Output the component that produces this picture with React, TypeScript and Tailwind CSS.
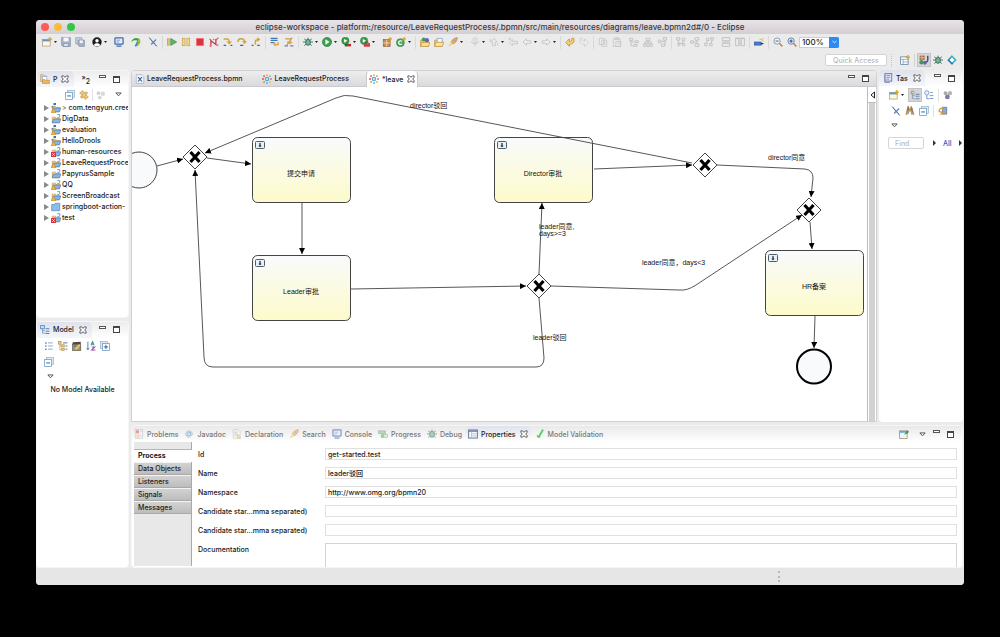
import type { ReactNode } from "react";

const glyphs: Record<string, ReactNode> = {
  newWizard: (
    <>
      <rect x="1" y="4" width="12" height="10.5" fill="#fdf8e6" stroke="#a68b58" />
      <rect x="1" y="4" width="12" height="3" fill="#5d93cf" />
      <path d="M12.5 0v7M9 3.5h7" stroke="#d9a520" strokeWidth="2" />
    </>
  ),
  save: (
    <>
      <path d="M1 1h14v14H3l-2-2z" fill="#a7b4c6" stroke="#7385a0" />
      <rect x="4" y="1" width="8" height="6" fill="#f3f6fa" />
      <rect x="4.5" y="10" width="7" height="5" fill="#dfe5ee" stroke="#7385a0" />
    </>
  ),
  saveAll: (
    <>
      <path d="M1 1h10v10H1z" fill="#c4cedb" stroke="#8a99b0" />
      <path d="M5 5h10v10H7l-2-2z" fill="#a7b4c6" stroke="#7385a0" />
      <rect x="7.5" y="5.5" width="5" height="4" fill="#f3f6fa" />
    </>
  ),
  person: (
    <>
      <circle cx="8" cy="8" r="7.5" fill="#1c1c1c" />
      <circle cx="8" cy="6" r="2.8" fill="#fff" />
      <path d="M3 13c1-4 9-4 10 0-3 2.5-7 2.5-10 0z" fill="#fff" />
    </>
  ),
  console: (
    <>
      <rect x="1.5" y="1.5" width="13" height="10" rx="1" fill="#e9f1fb" stroke="#3f67a8" strokeWidth="2" />
      <path d="M4 5h6M4 8h4" stroke="#3f67a8" />
      <path d="M4 14.5h8" stroke="#3f67a8" strokeWidth="2" />
    </>
  ),
  swoosh: (
    <>
      <path d="M0 8c3-7 9-8 14-4l-2 3C8 4 4 5 0 8z" fill="#3f9f48" />
      <path d="M13 2c4 4 2 10-3 13l-2-1c3-3 4-6 3-9z" fill="#9cc431" />
      <path d="M11 7l-4 8" stroke="#3b82c4" strokeWidth="2.4" />
    </>
  ),
  pin: (
    <>
      <path d="M2 1l12 14" stroke="#33577f" strokeWidth="1.6" />
      <path d="M13 4l-8 8M6 7l4 3" stroke="#5c89bd" strokeWidth="2" />
    </>
  ),
  resume: (
    <>
      <rect x="0.5" y="3" width="3" height="10" fill="#f0cf66" stroke="#b98d27" />
      <path d="M6 2.5l9.5 5.5L6 13.5z" fill="#5fb769" stroke="#2a8340" />
    </>
  ),
  pause: (
    <>
      <rect x="2" y="2" width="4.5" height="12" fill="#f3d889" stroke="#c09a42" />
      <rect x="9.5" y="2" width="4.5" height="12" fill="#f3d889" stroke="#c09a42" />
    </>
  ),
  stop: <rect x="2" y="2" width="12" height="12" fill="#e0303a" stroke="#f08a90" />,
  disconnect: (
    <>
      <path d="M3 14V6l8 6V3" fill="none" stroke="#c93c4b" strokeWidth="2" />
      <path d="M1 3l3 3M15 1l-4 4M1 14.500h3M12 13h3M7 3l1 2" stroke="#d9525f" strokeWidth="1.8" />
    </>
  ),
  stepInto: (
    <>
      <path d="M1 3h6c3 0 3 3 3 6" fill="none" stroke="#d8a33d" strokeWidth="2.4" />
      <path d="M5.500 7h9l-4.500 5z" fill="#d8a33d" />
      <path d="M1 13.500h4M12 13.500h3" stroke="#4d5f87" strokeWidth="2" />
    </>
  ),
  stepOver: (
    <>
      <path d="M1.500 8c0-7 9-7 11-1" fill="none" stroke="#d8a33d" strokeWidth="2.4" />
      <path d="M8 6.500h8l-4 5z" fill="#d8a33d" />
      <path d="M5 13.500h5" stroke="#4d5f87" strokeWidth="2" />
    </>
  ),
  stepReturn: (
    <>
      <path d="M7 12V7c0-2 2-3 6-3" fill="none" stroke="#d8a33d" strokeWidth="2.4" />
      <path d="M10 0l5 4-5 4z" fill="#d8a33d" />
      <path d="M1 13.500h3M10 13.500h4" stroke="#4d5f87" strokeWidth="2" />
    </>
  ),
  dropFrame: (
    <>
      <path d="M1 2h11M1 5.500h11M1 9h6" stroke="#4776b4" strokeWidth="2" />
      <path d="M9 12h4V8" fill="none" stroke="#d8a33d" strokeWidth="2" />
      <path d="M5 12l4-3.500v7z" fill="#d8a33d" />
    </>
  ),
  stepFilter: (
    <>
      <path d="M2 3h9M5 8h6M13 1L4 14" stroke="#c99a4a" strokeWidth="2" />
      <path d="M9 5l5 4-6 3z" fill="#dba84a" />
      <path d="M1 14h5M10 14h5" stroke="#6d7da5" strokeWidth="2" />
    </>
  ),
  bug: (
    <>
      <path d="M2 3l4 3M14 3l-4 3M0 8h5M16 8h-5M2 14l4-4M14 14l-4-4M8 1v3" stroke="#3b6a63" strokeWidth="1.4" />
      <ellipse cx="8" cy="8.500" rx="3.800" ry="4.800" fill="#79b58c" stroke="#2f6660" strokeWidth="1.400" />
    </>
  ),
  run: (
    <>
      <circle cx="8" cy="8" r="7.300" fill="#3ba04c" stroke="#23793a" />
      <path d="M5.500 3.500l6.500 4.500-6.500 4.500z" fill="#fff" />
    </>
  ),
  coverage: (
    <>
      <circle cx="7" cy="6" r="5.800" fill="#3ba04c" stroke="#23793a" />
      <path d="M5 3l5 3-5 3z" fill="#fff" />
      <rect x="6" y="11" width="5" height="4" fill="#1c6b2c" />
      <rect x="11" y="11" width="5" height="4" fill="#c8202f" />
    </>
  ),
  external: (
    <>
      <circle cx="6.500" cy="6" r="5.800" fill="#3ba04c" stroke="#23793a" />
      <path d="M4.500 3l5 3-5 3z" fill="#fff" />
      <rect x="6" y="10" width="10" height="5.500" fill="#d23b45" />
      <path d="M9 10V8h4v2" fill="none" stroke="#8d2027" />
    </>
  ),
  newPackage: (
    <>
      <rect x="2" y="4" width="11" height="11" fill="#c68a54" stroke="#8a5730" />
      <path d="M7.500 4v11M2 9.500h11" stroke="#f3dcb6" strokeWidth="1.400" />
      <path d="M13 0v6M10 3h6" stroke="#d9a520" strokeWidth="1.800" />
    </>
  ),
  newClass: (
    <>
      <circle cx="7" cy="9" r="6.300" fill="#4fa863" stroke="#2a7d44" />
      <path d="M9.500 7a3 3 0 1 0 0 4" fill="none" stroke="#fff" strokeWidth="1.800" />
      <path d="M13 0v6M10 3h6" stroke="#d9a520" strokeWidth="1.800" />
    </>
  ),
  openType: (
    <>
      <path d="M1 5h6l1 2h6v8H1z" fill="#f2ca6e" stroke="#b78a34" />
      <circle cx="6" cy="4" r="3.300" fill="#4a9a5c" />
      <circle cx="11" cy="5" r="3.300" fill="#6b62ad" />
      <path d="M3 9h13l-3 6H1z" fill="#fbe3a2" stroke="#b78a34" />
    </>
  ),
  openFolder: (
    <>
      <path d="M1 5h5l1 1h6v9H1z" fill="#f2ca6e" stroke="#b78a34" />
      <rect x="5" y="2" width="8" height="7" fill="#f2f6fb" stroke="#7e97ba" />
      <path d="M3 8.500h13l-3 6.500H1z" fill="#fbe3a2" stroke="#b78a34" />
    </>
  ),
  rocket: (
    <>
      <path d="M15 1c-5 0-8 3-10 7l3 3c4-2 7-5 7-10z" fill="#e6b15c" stroke="#b77f33" />
      <path d="M5 8l-4 6 1 1 6-4z" fill="#f6d36b" />
      <circle cx="10.500" cy="5.500" r="1.600" fill="#90a4c0" />
    </>
  ),
  downEdit: (
    <>
      <rect x="5" y="1" width="6" height="8" rx="2" fill="#e2e2e2" stroke="#c7c7c7" />
      <path d="M2 7c0 5 12 5 12 0M8 11v4" fill="none" stroke="#c7c7c7" strokeWidth="1.500" />
    </>
  ),
  upEdit: <path d="M5.500 14V8H3l5-6 5 6h-3v6zM2 3v5M14 10v4" fill="none" stroke="#c7c7c7" strokeWidth="1.500" />,
  lastEdit: <path d="M7 4L2 9l5 5v-3h8V7H7V4zM3 1v4M1 3h4" fill="none" stroke="#c7c7c7" strokeWidth="1.500" />,
  back: <path d="M7 3L1.500 8 7 13v-3h7V6H7z" fill="#f1f1f1" stroke="#c2c2c2" strokeWidth="1.400" />,
  forward: <path d="M9 3l5.500 5L9 13v-3H2V6h7z" fill="#f1f1f1" stroke="#c2c2c2" strokeWidth="1.400" />,
  undo: <path d="M7 3v4c3 1 4-1 4-5h3c2 7-2 10-7 9.500V15L1 9z" fill="#f5cf70" stroke="#c48a2b" strokeWidth="1.200" />,
  redo: <path d="M9 3v4C6 8 5 6 5 2H2c-2 7 2 10 7 9.500V15l6-6z" fill="#efefef" stroke="#c7c7c7" strokeWidth="1.200" />,
  copy: <path d="M2 2h8v10H2zM6 5h8v10H6zM8 8h4M8 11h4" fill="#ececec" stroke="#c5c5c5" strokeWidth="1.300" />,
  paste: <path d="M2 3h11v12H2zM5 1h5v3H5zM6 7h8v8H6zM8 10h4" fill="#ececec" stroke="#c5c5c5" strokeWidth="1.300" />,
  alignA: <path d="M1 2h5v4H1zM10 6h5v3h-5zM8 12h5v3H8zM3 6v8h5M3 8h7" fill="none" stroke="#bdbdbd" strokeWidth="1.300" />,
  alignB: <path d="M5 2h6v4H5zM1 11h4v4H1zM6 11h4v4H6zM11 11h4v4h-4zM8 6v5M3 11V8h10v3" fill="none" stroke="#bdbdbd" strokeWidth="1.300" />,
  alignC: <path d="M10 1h5v4h-5zM2 5h4v4H2zM7 11h5v4H7zM13 5v8M6 7h7" fill="none" stroke="#bdbdbd" strokeWidth="1.300" />,
  alignD: <path d="M1 1h5v4H1zM10 2h4v4h-4zM4 5v5h7V6M3 10h3v4H3zM10 10h4v4h-4z" fill="none" stroke="#bdbdbd" strokeWidth="1.300" />,
  alignE: <path d="M8 1h6v4H8zM1 6h4v4H1zM8 11h6v4H8zM5 8h6M11 5v6" fill="none" stroke="#bdbdbd" strokeWidth="1.300" />,
  alignF: <path d="M4 2h4v4H4zM11 1h4v4h-4zM1 10h4v4H1zM9 10h4v4H9zM6 6l-3 4M13 5l-2 5" fill="none" stroke="#bdbdbd" strokeWidth="1.300" />,
  sameWidth: <path d="M2 1h12v5H2zM2 10h12v5H2zM2 8h12" fill="none" stroke="#bdbdbd" strokeWidth="1.400" />,
  sameHeight: <path d="M1 2h5v12H1zM10 2h5v12h-5zM1 2h14M8 4v10" fill="none" stroke="#bdbdbd" strokeWidth="1.400" />,
  ruler: (
    <>
      <rect x="0.500" y="8" width="11" height="5" fill="#4a7fd0" stroke="#2d5493" />
      <path d="M11 10.500h4" stroke="#333" strokeWidth="2" />
      <path d="M9 4h2M12 3h3M13 6h2" stroke="#d9b138" strokeWidth="1.600" />
    </>
  ),
  zoomOut: (
    <>
      <path d="M10 10l5 5" stroke="#b68b4a" strokeWidth="2.400" />
      <circle cx="6.500" cy="6.500" r="5" fill="#f4f7fb" stroke="#8694ac" strokeWidth="1.500" />
      <path d="M4 6.500h5" stroke="#3f5f94" strokeWidth="1.600" />
    </>
  ),
  zoomIn: (
    <>
      <path d="M10 10l5 5" stroke="#b68b4a" strokeWidth="2.400" />
      <circle cx="6.500" cy="6.500" r="5" fill="#e4ecf7" stroke="#6a7fa4" strokeWidth="1.500" />
      <path d="M4 6.500h5M6.500 4v5" stroke="#2d56a0" strokeWidth="1.800" />
    </>
  ),
  perspective: (
    <>
      <rect x="1" y="3" width="12" height="12" fill="#fff" stroke="#6e8c9e" strokeWidth="1.400" />
      <path d="M1 7h12M5 7v8M5 11h8" stroke="#6e8c9e" />
      <path d="M12.500 0v7M9 3.500h7" stroke="#d9a520" strokeWidth="2" />
    </>
  ),
  javaEE: (
    <>
      <rect x="1" y="1" width="8" height="7" fill="#b3694c" />
      <path d="M5 1v7M1 4.500h8" stroke="#f0d9bd" />
      <path d="M14 1v7c0 4-4 4-5 2" fill="none" stroke="#3b4d95" strokeWidth="2.400" />
      <circle cx="4" cy="11.500" r="3.500" fill="#3f9a55" />
      <circle cx="9.500" cy="12.500" r="3" fill="#6c5fae" />
    </>
  ),
  gitDiamond: (
    <>
      <path d="M8 0.500L0.500 8l4 4 3.500-4z" fill="#3d86c8" />
      <path d="M8 0.500L15.500 8 8 15.500l-3-3L9.500 8 5 3.500z" fill="#36b6bf" />
      <path d="M0.500 8L8 15.500l2-2L4.500 8z" fill="#2e75b8" />
      <path d="M8 4L12 8 8 12 4 8z" fill="#fff" />
    </>
  ),
  explorer: (
    <>
      <path d="M1 1h4l1 2h4v9H1z" fill="#f2d48b" stroke="#c09a4c" />
      <rect x="4" y="4" width="7" height="8" fill="#fff" stroke="#8aa3c8" />
      <path d="M4 9h4l1 1h6v5H4z" fill="#f0b95a" stroke="#bd8633" />
    </>
  ),
  collapse: (
    <>
      <rect x="4" y="1" width="11" height="11" fill="#dceaf5" stroke="#85a9c9" />
      <rect x="1" y="4" width="11" height="11" fill="#fff" stroke="#6a97bf" strokeWidth="1.200" />
      <path d="M3.500 9.500h6" stroke="#31679e" strokeWidth="1.600" />
    </>
  ),
  expand: (
    <>
      <rect x="1" y="1" width="11" height="11" fill="#dceaf5" stroke="#85a9c9" />
      <rect x="4" y="4" width="11" height="11" fill="#fff" stroke="#6a97bf" strokeWidth="1.200" />
      <path d="M6 9.500h7M9.500 6v7" stroke="#31679e" strokeWidth="1.600" />
    </>
  ),
  link: (
    <>
      <path d="M6 1L1 5l5 4V6.500h7v-3H6z" fill="#f3cd77" stroke="#bf8c33" />
      <path d="M10 7l5 4-5 4v-2.500H3v-3h7z" fill="#f3cd77" stroke="#bf8c33" />
    </>
  ),
  dotsMuted: (
    <>
      <circle cx="4" cy="5" r="3" fill="#d3d3d3" />
      <circle cx="11" cy="6" r="3.500" fill="#dadada" />
      <circle cx="6" cy="12" r="3" fill="#d6d6d6" />
    </>
  ),
  dots: (
    <>
      <circle cx="4" cy="5" r="3" fill="#aaa" />
      <circle cx="11" cy="5" r="3.500" fill="#b5b5b5" />
      <circle cx="7" cy="11" r="3.800" fill="#8277a8" />
    </>
  ),
  bpmnFile: (
    <>
      <path d="M2 1h9l3 3v11H2z" fill="#f2f5f9" stroke="#9aa7b8" />
      <path d="M5 5l6 7M11 5l-6 7" stroke="#2d5da3" strokeWidth="1.800" />
    </>
  ),
  flower: (
    <>
      <rect x="5.500" y="5.500" width="5" height="5" rx="1" fill="#bfe2fb" stroke="#2d94da" strokeWidth="1.400" />
      <circle cx="8" cy="1.800" r="1.500" fill="#f0b429" />
      <circle cx="12.700" cy="3.300" r="1.500" fill="#7cbf3f" />
      <circle cx="14.500" cy="8" r="1.500" fill="#e85a9b" />
      <circle cx="12.700" cy="12.700" r="1.500" fill="#f0b429" />
      <circle cx="8" cy="14.300" r="1.500" fill="#4ab7e8" />
      <circle cx="3.300" cy="12.700" r="1.500" fill="#f08a29" />
      <circle cx="1.600" cy="8" r="1.500" fill="#e0463f" />
      <circle cx="3.300" cy="3.300" r="1.500" fill="#e0463f" />
    </>
  ),
  task: (
    <>
      <rect x="3" y="1" width="11" height="12" fill="#dde3f3" stroke="#6675a5" strokeWidth="1.400" />
      <path d="M5.500 4h6M5.500 7h6M5.500 10h4" stroke="#6675a5" />
      <path d="M3 3v12h8" fill="none" stroke="#8c8fb0" strokeWidth="1.600" />
    </>
  ),
  model: (
    <>
      <rect x="1" y="1" width="6" height="5" fill="#cfe2f4" stroke="#4c84ba" strokeWidth="1.300" />
      <path d="M4 6v7h5M4 9h4" fill="none" stroke="#5b7896" />
      <path d="M9 6h6M9 10h6M9 13.500h6" stroke="#4c84ba" strokeWidth="1.800" />
    </>
  ),
  list: (
    <>
      <path d="M2 3h2M2 8h2M2 13h2" stroke="#3d6eb3" strokeWidth="2.400" />
      <path d="M6.500 3H14M6.500 8H14M6.500 13H14" stroke="#8aa8d0" strokeWidth="1.600" />
    </>
  ),
  tree: (
    <>
      <path d="M3 4v10h4M3 8h4" fill="none" stroke="#8b8b8b" />
      <rect x="1" y="1" width="4" height="4" fill="#f2cf78" stroke="#b08b3c" />
      <rect x="6" y="6" width="4" height="3.500" fill="#f2cf78" stroke="#b08b3c" />
      <rect x="6" y="11.500" width="4" height="3.500" fill="#f2cf78" stroke="#b08b3c" />
      <path d="M8 3h7M12 8h3M12 13h3" stroke="#4c78b8" strokeWidth="1.600" />
    </>
  ),
  clap: (
    <>
      <rect x="1" y="5" width="13" height="10" fill="#a89558" stroke="#4b4a42" />
      <path d="M1 2l13-1v4H1z" fill="#4b4a42" />
      <path d="M4 12l7-7 3 1-6 8z" fill="#e9c16c" />
      <path d="M3 8h4" stroke="#3e6fae" strokeWidth="2" />
    </>
  ),
  sort: (
    <>
      <path d="M3 1v13M1 11l2 3 2-3" fill="none" stroke="#5b7fb4" strokeWidth="1.500" />
      <path d="M8 7l2.500-6L13 7M9 5h3" fill="none" stroke="#2f9a86" strokeWidth="1.700" />
      <path d="M9 9.500h5l-5 5h6" fill="none" stroke="#9a4da8" strokeWidth="1.700" />
    </>
  ),
  category: (
    <>
      <path d="M2 6h5M2 6V2h4l1 2" fill="none" stroke="#a08c57" strokeWidth="1.400" />
      <path d="M4 6v8h4M4 9h4" fill="none" stroke="#7c8ba5" />
      <path d="M9 7h6M9 10h6M9 14h6" stroke="#6f93c4" strokeWidth="1.800" />
    </>
  ),
  schedule: (
    <>
      <circle cx="4.500" cy="4.500" r="3.500" fill="#eef4fb" stroke="#6f93c4" strokeWidth="1.300" />
      <path d="M4.500 8v6H8M9 9h6M9 13.500h6M10 4h4" fill="none" stroke="#6f93c4" strokeWidth="1.500" />
    </>
  ),
  people: (
    <>
      <path d="M2 14l3-12 3 6 2-6 4 12" fill="none" stroke="#c49143" strokeWidth="2.600" />
      <path d="M5 1v12M11 3v11" stroke="#4c6390" strokeWidth="1.500" />
    </>
  ),
  sync: (
    <>
      <path d="M7 2h7v11H7z" fill="#8aa9d8" stroke="#4669a5" />
      <path d="M9 4c-4-2-8 1-7 5l5 1-3 4M8 8c4 0 4 4 0 5" fill="none" stroke="#d79b34" strokeWidth="2" />
    </>
  ),
  problems: (
    <>
      <rect x="2" y="1" width="12" height="14" fill="#f2f4f8" stroke="#aab4c4" />
      <rect x="3" y="2" width="5" height="5" fill="#e2626a" />
      <path d="M4 9h5v5H4z" fill="#f0c56a" />
      <path d="M10 4h3M10 11h3" stroke="#95a5c0" />
    </>
  ),
  at: (
    <>
      <circle cx="8" cy="8" r="2.400" fill="none" stroke="#5d93cc" strokeWidth="1.700" />
      <path d="M10.400 5.500v4.500c1 1.500 2.800 0.500 2.700-2A5 5 0 1 0 10.500 12.500" fill="none" stroke="#5d93cc" strokeWidth="1.500" />
    </>
  ),
  declaration: (
    <>
      <path d="M2 1h8l3 3v11H2z" fill="#fbfaf4" stroke="#b5a985" />
      <path d="M4 5h5M4 8h4M4 11h3" stroke="#5f83bd" />
      <path d="M9 8l5 6H8z" fill="#f5dd9c" stroke="#cf8f24" />
    </>
  ),
  progress: (
    <>
      <rect x="1" y="3" width="11" height="4.500" fill="#8cc98c" stroke="#6c9e6c" />
      <rect x="5" y="9" width="10" height="4.500" fill="#d5e8d5" stroke="#6c9e6c" />
      <rect x="5" y="9" width="5" height="4.500" fill="#5fb35f" />
    </>
  ),
  properties: (
    <>
      <rect x="1" y="1.500" width="14" height="13" fill="#f6f9fc" stroke="#5e7593" strokeWidth="1.500" />
      <path d="M1 3.500h14" stroke="#5e7593" strokeWidth="2" />
      <path d="M5.500 4v10M5.500 7.500H15M5.500 11H15" stroke="#9db0c8" />
    </>
  ),
  check: <path d="M3 11c1 0 3 1 3 3 2-5 4-9 7-13" fill="none" stroke="#5fce6a" strokeWidth="3" />,
  pinView: (
    <>
      <rect x="1" y="3" width="12" height="12" fill="#eef6fc" stroke="#9a8c6c" strokeWidth="1.200" />
      <rect x="1" y="3" width="12" height="3" fill="#65a5dc" />
      <path d="M8 9l3-4 2-3 3 2-2 3-3 1z" fill="#3f9a45" />
    </>
  ),
};

const Icon = ({ name }: { name: string }) => (
  <svg viewBox="0 0 16 16" className="h-[10px] w-[10px] shrink-0" aria-hidden="true">
    {glyphs[name]}
  </svg>
);

const IconButton = ({ name, label, active }: { name: string; label?: string; active?: boolean }) => (
  <button
    type="button"
    aria-label={label ?? name}
    className={`flex h-[14px] w-[14px] shrink-0 items-center justify-center ${
      active ? "border border-[#c3c3c3] bg-[#d6d6d6]" : ""
    }`}
  >
    <Icon name={name} />
  </button>
);

const Caret = () => (
  <span className="flex w-[5px] shrink-0 items-center">
    <svg viewBox="0 0 6 4" className="h-[2px] w-[3px]" aria-hidden="true">
      <path d="M0 0h6L3 4z" fill="#222" />
    </svg>
  </span>
);

const RightArrow = () => (
  <svg viewBox="0 0 3 6" className="h-[6px] w-[3px] shrink-0" aria-hidden="true">
    <path d="M0 0l3 3-3 3z" fill="#333" />
  </svg>
);

const CloseIcon = () => (
  <svg viewBox="0 0 9 9" className="h-[8px] w-[8px] shrink-0" aria-hidden="true">
    <path
      d="M1 1h2l1.500 1.700L6 1h2v2L6.300 4.500 8 6v2H6L4.500 6.300 3 8H1V6l1.700-1.500L1 3z"
      fill="#fff"
      stroke="#3c3c3c"
      strokeWidth="0.900"
    />
  </svg>
);

const ViewMenu = () => (
  <button type="button" aria-label="View menu" className="flex w-[14px] items-center justify-center">
    <svg viewBox="0 0 8 5" className="h-[5px] w-[7px]" aria-hidden="true">
      <path d="M1 0.700h6L4 4z" fill="#fff" stroke="#444" />
    </svg>
  </button>
);

const MinMax = () => (
  <>
    <button type="button" aria-label="Minimize" className="flex h-[10px] w-[14px] justify-center">
      <span className="mt-px h-[3px] w-[7px] border border-[#555] bg-white" />
    </button>
    <button type="button" aria-label="Maximize" className="flex h-[10px] w-[14px] items-center justify-center">
      <span className="h-[7px] w-[7px] border border-t-2 border-[#444] bg-white" />
    </button>
  </>
);

// "|" is a visible divider, " " a narrow gap and "v" a drop-down caret
const toolbarItems = [
  "newWizard", "v", "save", "saveAll", " ", "person", "v", " ", "console", " ", "swoosh", " ", "pin", "|",
  "resume", "pause", "stop", "disconnect", "stepInto", "stepOver", "stepReturn", "|",
  "dropFrame", "stepFilter", "|", "bug", "v", "run", "v", "coverage", "v", "external", "v", " ",
  "newPackage", "newClass", "v", "|", "openType", "openFolder", "rocket", "v", " ",
  "downEdit", "v", "upEdit", "v", "lastEdit", "back", "v", "forward", "v", "|", "undo", "redo", "|",
  "copy", "paste", " ", "alignA", "alignB", "alignC", "|", "alignD", "alignE", "alignF", " ",
  "sameWidth", "sameHeight", "|", "ruler", "|", "zoomOut", "zoomIn",
];

const MainToolbar = () => (
  <div className="flex h-4 items-center overflow-hidden pl-[4px]">
    {toolbarItems.map((item, index) => {
      if (item === "v") return <Caret key={index} />;
      if (item === "|") {
        return (
          <span key={index} className="flex w-[5px] shrink-0 justify-center">
            <span className="h-[13px] w-px bg-[#d9d9d9]" />
          </span>
        );
      }
      if (item === " ") return <span key={index} className="w-[3px] shrink-0" />;
      return <IconButton key={index} name={item} />;
    })}
    <div className="relative w-10 shrink-0">
      <select
        aria-label="Zoom level"
        defaultValue="100%"
        className="block h-[11px] w-full appearance-none border border-[#cfcfcf] bg-white pl-[2px] text-[8px] leading-[9px] text-[#222]"
      >
        <option>100%</option>
      </select>
      <span className="pointer-events-none absolute inset-y-0 right-0 flex w-[10px] items-center justify-center rounded-r-[2px] bg-[#2a8bf7]">
        <svg viewBox="0 0 6 4" className="h-[4px] w-[5px]" aria-hidden="true">
          <path d="M0.500 0.500L3 3 5.500 0.500" fill="none" stroke="#fff" />
        </svg>
      </span>
    </div>
  </div>
);

const PerspectiveBar = () => (
  <div className="flex h-5 items-center justify-end pr-[5px]">
    <input
      aria-label="Quick Access"
      placeholder="Quick Access"
      className="h-[12px] w-[62px] rounded-[2px] border border-[#d3d3d3] bg-white text-center text-[7px] leading-[10px] placeholder:text-[#b9b9b9]"
    />
    <span className="ml-1 h-[13px] border-l border-dotted border-[#c4c4c4]" />
    <span className="w-[6px]" />
    <IconButton name="perspective" label="Open Perspective" />
    <span className="mx-[2px] h-[13px] w-px bg-[#d4d4d4]" />
    <IconButton name="javaEE" label="Java EE" active />
    <IconButton name="bug" label="Debug" />
    <IconButton name="gitDiamond" label="Git" />
  </div>
);

const projects = [
  { name: "com.tengyun.cree", mark: "warn", web: true, dirty: true },
  { name: "DigData", mark: "" },
  { name: "evaluation", mark: "warn", web: true },
  { name: "HelloDrools", mark: "warn", web: true },
  { name: "human-resources", mark: "error" },
  { name: "LeaveRequestProce", mark: "warn" },
  { name: "PapyrusSample", mark: "" },
  { name: "QQ", mark: "warn" },
  { name: "ScreenBroadcast", mark: "warn" },
  { name: "springboot-action-", mark: "closed" },
  { name: "test", mark: "error" },
];

const ProjectIcon = ({ mark, web }: { mark: string; web?: boolean }) => (
  <svg viewBox="0 0 16 16" className="h-[10px] w-[10px] shrink-0" aria-hidden="true">
    {mark === "closed" ? (
      <path d="M1 4h5l1-2h7v12H1z" fill="#8bbcea" stroke="#4b82bb" />
    ) : (
      <>
        <path d="M2 5h5l1 2h6v7H2z" fill="#f4cf7b" stroke="#c09343" />
        <path d="M4 8h12l-3 6H2z" fill="#87b5e6" stroke="#4679b5" />
        {web ? (
          <path d="M4 0h4v3H4zM1 5h3v2H1z" fill="#3f6db0" />
        ) : (
          <path d="M10 1h4v3c0 2-3 2-4 1" fill="none" stroke="#5a86c4" strokeWidth="1.400" />
        )}
      </>
    )}
    {mark === "warn" ? <path d="M4 8l4 8H0z" fill="#f0b93a" stroke="#b9791d" strokeWidth="0.800" /> : null}
    {mark === "error" ? (
      <>
        <rect x="0" y="8" width="8" height="8" fill="#dc3440" />
        <path d="M2 10l4 4M6 10l-4 4" stroke="#fff" strokeWidth="1.300" />
      </>
    ) : null}
  </svg>
);

const ProjectExplorer = () => (
  <section className="flex min-h-0 flex-1 flex-col overflow-hidden rounded-[4px] border border-[#f6f6f6] bg-white">
    <header className="flex h-4 items-center bg-linear-to-b from-[#ececec] to-white pr-[5px]">
      <div className="flex h-full items-center gap-[3px] rounded-tr-[5px] bg-linear-to-b from-[#dfe2ec] to-[#f4f6fa] pr-[5px] pl-[3px]">
        <Icon name="explorer" />
        <h2>P</h2>
        <CloseIcon />
      </div>
      <button type="button" aria-label="Show list" className="ml-auto flex items-center leading-none">
        <span className="pb-1">»</span>
        <span className="pt-1">2</span>
      </button>
      <span className="w-[5px]" />
      <MinMax />
    </header>
    <div className="flex h-[15px] items-center justify-end pr-[3px]">
      <IconButton name="collapse" label="Collapse All" />
      <IconButton name="link" label="Link with Editor" />
      <span className="mx-px h-[12px] w-px bg-[#e2e2e2]" />
      <IconButton name="dotsMuted" label="Focus" />
      <span className="w-[3px]" />
      <ViewMenu />
    </div>
    <ul>
      {projects.map((project) => (
        <li key={project.name} className="flex h-[11px] items-center pl-[7px] whitespace-nowrap">
          <svg viewBox="0 0 5 6" className="mr-[2px] h-[6px] w-[5px] shrink-0" aria-hidden="true">
            <path d="M0 0l5 3-5 3z" fill="#8a8a8a" />
          </svg>
          <ProjectIcon mark={project.mark} web={project.web} />
          <span className="ml-px">
            {project.dirty ? <span className="text-[#a5762c]">&gt; </span> : null}
            {project.name}
          </span>
        </li>
      ))}
    </ul>
  </section>
);

const ModelView = () => (
  <section className="flex min-h-0 flex-1 flex-col overflow-hidden rounded-[4px] border border-[#f6f6f6] bg-white">
    <header className="flex h-4 items-center bg-linear-to-b from-[#ececec] to-white pr-[5px]">
      <div className="flex h-full items-center gap-[3px] rounded-tr-[5px] bg-linear-to-b from-[#dfe2ec] to-[#f4f6fa] pr-[5px] pl-[3px]">
        <Icon name="model" />
        <h2 className="mr-[2px]">Model</h2>
        <CloseIcon />
      </div>
      <span className="ml-auto" />
      <MinMax />
    </header>
    <div className="flex flex-wrap gap-y-[2px] pt-px pr-[10px] pl-[5px]">
      <IconButton name="list" />
      <IconButton name="tree" />
      <IconButton name="clap" />
      <IconButton name="sort" />
      <IconButton name="expand" />
      <IconButton name="collapse" />
    </div>
    <div className="flex h-[13px] pt-[2px] pl-[6px]">
      <ViewMenu />
    </div>
    <p className="text-center leading-[16px]">No Model Available</p>
  </section>
);

const tasks = [
  { x: 252, y: 137, label: "提交申请" },
  { x: 252, y: 255, label: "Leader审批" },
  { x: 494, y: 137, label: "Director审批" },
  { x: 765, y: 250, label: "HR备案" },
];

const gateways = [
  { x: 195, y: 157 },
  { x: 705, y: 165 },
  { x: 809, y: 210 },
  { x: 539, y: 286 },
];

const flows = [
  "M157 166L183 159",
  "M207 158L251 164",
  "M302 203V254",
  "M351 289L526 286",
  "M539 298L544 358Q544 367 536 367H213Q204 367 204 357L195 170",
  "M539 274L542 203",
  "M594 169L692 165",
  "M692 163L353 96Q344 94 336 98L205 153",
  "M717 165L805 169Q813 170 813 178L811 197",
  "M551 286L679 290Q687 291 696 285L802 215",
  "M810 222L812 249",
  "M815 316L814 348",
];

const Diagram = () => (
  <svg
    viewBox="132 87 735 334"
    className="h-[334px] w-[735px] shrink-0 text-[7px] font-normal"
    style={{ fontFamily: '"Liberation Sans", "Noto Sans CJK SC", sans-serif' }}
    role="img"
    aria-label="Leave request process"
  >
    <defs>
      <linearGradient id="taskFill" x1="0" y1="0" x2="0" y2="1">
        <stop offset="0" stopColor="#f9fafc" />
        <stop offset="1" stopColor="#fdfbca" />
      </linearGradient>
      <marker id="arrow" viewBox="0 0 6 6" refX="6" refY="3" markerWidth="6" markerHeight="6" markerUnits="userSpaceOnUse" orient="auto">
        <path d="M0 0l6 3-6 3z" fill="#000" />
      </marker>
    </defs>
    <circle cx="139" cy="170" r="18" fill="#f9fafc" stroke="#444" />
    <circle cx="814" cy="366.500" r="17" fill="#f9fafc" stroke="#000" strokeWidth="2" />
    {tasks.map((task) => (
      <g key={task.label} transform={`translate(${task.x} ${task.y})`}>
        <rect x="0.500" y="0.500" width="98" height="65" rx="5" fill="url(#taskFill)" stroke="#444" />
        <rect x="3.500" y="4.500" width="9" height="7" rx="1" fill="#e6f1f8" stroke="#4d5f6b" />
        <path d="M8 6v4M6.800 9h2.400" stroke="#1c2b33" strokeWidth="1.200" />
        <text x="49" y="39" textAnchor="middle" fill="#111">
          {task.label}
        </text>
      </g>
    ))}
    <g fill="none" stroke="#444" strokeWidth="0.900">
      {flows.map((d) => (
        <path key={d} d={d} markerEnd="url(#arrow)" />
      ))}
    </g>
    {gateways.map((gateway) => (
      <g key={gateway.x} transform={`translate(${gateway.x} ${gateway.y})`}>
        <path d="M0-12L12 0 0 12-12 0z" fill="#fff" stroke="#444" />
        <path d="M-4.500-5l9 10M4.500-5l-9 10" stroke="#000" strokeWidth="3.200" />
      </g>
    ))}
    <g fill="#111">
      <text x="410" y="108">director驳回</text>
      <text x="539" y="229">leader同意,</text>
      <text x="539" y="236">days&gt;=3</text>
      <text x="642" y="265">leader同意，days&lt;3</text>
      <text x="533" y="340">leader驳回</text>
      <text x="768" y="160">director同意</text>
    </g>
  </svg>
);

const Editor = () => (
  <section className="flex min-w-0 flex-1 flex-col overflow-hidden rounded-t-[4px] border border-[#cfcfd4] bg-white">
    <header className="flex h-4 items-stretch border-b border-[#c9c9d0] bg-linear-to-b from-[#eeeeee] to-[#dadadc] pr-[4px]">
      <div className="flex items-center gap-[2px] pl-[3px]">
        <Icon name="bpmnFile" />
        <span>LeaveRequestProcess.bpmn</span>
      </div>
      <div className="ml-[19px] flex items-center gap-[3px]">
        <Icon name="flower" />
        <span>LeaveRequestProcess</span>
      </div>
      <div className="-mb-px ml-[17px] flex items-center gap-[3px] rounded-t-[4px] border-x border-[#c9c9d0] bg-white px-[2px]">
        <Icon name="flower" />
        <span className="mr-px">*leave</span>
        <CloseIcon />
      </div>
      <div className="ml-auto flex items-center">
        <MinMax />
      </div>
    </header>
    <div className="flex min-h-0 flex-1">
      <div className="min-w-0 flex-1 overflow-hidden">
        <Diagram />
      </div>
      <div className="flex w-[9px] shrink-0 flex-col border-l border-[#bdbdbd] bg-white">
        <button type="button" aria-label="Show palette" className="flex h-4 items-center justify-center border-b border-[#bdbdbd]">
          <svg viewBox="0 0 5 8" className="h-[8px] w-[5px]" aria-hidden="true">
            <path d="M4.500 1v6L1 4z" fill="#fff" stroke="#222" />
          </svg>
        </button>
        <span className="mx-px flex-1 bg-[#d2d2d2]" />
      </div>
    </div>
  </section>
);

const TaskList = () => (
  <section className="flex w-[84px] shrink-0 flex-col overflow-hidden rounded-[4px] bg-white">
    <header className="flex h-4 items-center bg-linear-to-b from-[#ececec] to-white pr-[5px]">
      <div className="flex h-full items-center gap-[3px] rounded-tr-[5px] bg-linear-to-b from-[#dfe2ec] to-[#f4f6fa] px-[4px]">
        <Icon name="task" />
        <h2 className="mr-[2px]">Tas</h2>
        <CloseIcon />
      </div>
      <span className="ml-auto" />
      <MinMax />
    </header>
    <div className="flex h-[18px] items-center pl-[8px]">
      <IconButton name="newWizard" label="New Task" />
      <Caret />
      <span className="w-[2px]" />
      <IconButton name="category" label="Categorized" active />
      <IconButton name="schedule" label="Scheduled" />
      <span className="mx-[2px] h-[13px] w-px bg-[#e2e2e2]" />
      <IconButton name="dots" label="Focus on Workweek" />
    </div>
    <div className="flex h-[14px] items-center pl-[10px]">
      <IconButton name="pin" label="Find" />
      <IconButton name="people" label="Show My Tasks" />
      <IconButton name="collapse" label="Collapse All" />
      <span className="mx-[2px] h-[12px] w-px bg-[#e2e2e2]" />
      <IconButton name="sync" label="Synchronize" />
    </div>
    <div className="flex h-[14px] items-center pl-[8px]">
      <ViewMenu />
    </div>
    <div className="flex items-center pt-[5px] pl-[9px]">
      <input
        aria-label="Find task"
        placeholder="Find"
        className="h-[12px] w-[36px] rounded-[2px] border border-[#d5d5d5] px-[6px] text-[7px] placeholder:text-[#bcbcbc]"
      />
      <span className="w-[9px]" />
      <RightArrow />
      <a href="#all" className="mx-[7px] text-[#2b57b8]">
        All
      </a>
      <RightArrow />
    </div>
  </section>
);

const viewTabs = [
  { icon: "problems", label: "Problems" },
  { icon: "at", label: "Javadoc" },
  { icon: "declaration", label: "Declaration" },
  { icon: "rocket", label: "Search" },
  { icon: "console", label: "Console" },
  { icon: "progress", label: "Progress" },
  { icon: "bug", label: "Debug" },
];

const sections = ["Data Objects", "Listeners", "Signals", "Messages"];

const fields = [
  { id: "id", label: "Id", value: "get-started.test" },
  { id: "name", label: "Name", value: "leader驳回" },
  { id: "namespace", label: "Namespace", value: "http://www.omg.org/bpmn20" },
  { id: "users", label: "Candidate star...mma separated)", value: "" },
  { id: "groups", label: "Candidate star...mma separated)", value: "" },
];

const PropertiesView = () => (
  <section className="flex h-[143px] shrink-0 flex-col overflow-hidden rounded-[4px] border border-[#f6f6f6] bg-white">
    <header className="flex h-4 shrink-0 items-center bg-linear-to-b from-[#e9e9e9] to-white pr-[5px]">
      <div className="flex items-center gap-[6px] pl-[2px] text-[#777]">
        {viewTabs.map((tab) => (
          <div key={tab.label} className="flex items-center gap-[3px]">
            <span className="opacity-60">
              <Icon name={tab.icon} />
            </span>
            <span>{tab.label}</span>
          </div>
        ))}
      </div>
      <div className="ml-[3px] flex h-full items-center gap-[3px] rounded-t-[5px] bg-linear-to-b from-[#dfe2ec] to-white px-[3px]">
        <Icon name="properties" />
        <h2 className="mr-px">Properties</h2>
        <CloseIcon />
      </div>
      <div className="ml-[4px] flex items-center gap-[3px] text-[#777]">
        <Icon name="check" />
        <span>Model Validation</span>
      </div>
      <div className="ml-auto flex items-center">
        <IconButton name="pinView" label="Pin to selection" />
        <span className="w-1" />
        <ViewMenu />
        <MinMax />
      </div>
    </header>
    <div className="flex min-h-0 flex-1">
      <nav className="mb-px ml-[2px] flex w-[58px] shrink-0 flex-col border-r border-[#a9a9a9] bg-[#e8e8e8]">
        <span className="h-[8px] border-b border-[#b4b4b4]" />
        <button type="button" className="-mr-px h-[12px] bg-white pl-1 text-left leading-[12px] font-bold">
          Process
        </button>
        {sections.map((section) => (
          <button
            key={section}
            type="button"
            className="h-[13px] border-t border-b border-t-[#f4f4f4] border-b-[#a9a9a9] bg-linear-to-b from-[#d2d2d2] to-[#bdbdbd] pl-1 text-left leading-[11px]"
          >
            {section}
          </button>
        ))}
      </nav>
      <form className="flex min-w-0 flex-1 flex-col gap-[7px] overflow-hidden pt-[6px] pr-[5px] pl-[6px]">
        {fields.map((field) => (
          <div key={field.id} className="flex h-[12px] shrink-0 items-center">
            <label htmlFor={field.id} className="w-[127px] shrink-0">
              {field.label}
            </label>
            <input
              id={field.id}
              defaultValue={field.value}
              className="h-[12px] min-w-0 flex-1 border border-[#e0e0e0] bg-white px-[2px] leading-[10px]"
            />
          </div>
        ))}
        <div className="flex min-h-0 flex-1 items-stretch">
          <label htmlFor="documentation" className="w-[127px] shrink-0 leading-[14px]">
            Documentation
          </label>
          <textarea
            id="documentation"
            className="min-w-0 flex-1 resize-none border border-b-0 border-[#d3d3d3] bg-white"
          />
        </div>
      </form>
    </div>
  </section>
);

export default function App() {
  return (
    <div
      className="flex min-h-screen flex-col bg-black px-9 pt-5 pb-[52px] text-[7px] leading-[11px] font-medium text-[#1a1a1a]"
      style={{ fontFamily: 'Inter, "Noto Sans CJK SC", sans-serif' }}
    >
      <div className="flex flex-1 flex-col overflow-hidden rounded-[4px] bg-[#ebebeb]">
        <header className="relative flex h-[14px] items-center justify-center bg-linear-to-b from-[#e9e4e9] to-[#d2ced2]">
          <div className="absolute inset-y-0 left-[5px] flex items-center gap-[5px]">
            <button type="button" aria-label="Close window" className="h-2 w-2 rounded-full bg-[#fc5b57]" />
            <button type="button" aria-label="Minimize window" className="h-2 w-2 rounded-full bg-[#fdbb3c]" />
            <button type="button" aria-label="Zoom window" className="h-2 w-2 rounded-full bg-[#33c748]" />
          </div>
          <h1 className="text-[8px] text-[#3a3a3a]">
            eclipse-workspace - platform:/resource/LeaveRequestProcess/.bpmn/src/main/resources/diagrams/leave.bpmn2d#/0 - Eclipse
          </h1>
        </header>
        <MainToolbar />
        <PerspectiveBar />
        <main className="flex flex-1 gap-[2px] pr-px">
          <div className="flex w-[93px] shrink-0 flex-col gap-[3px]">
            <ProjectExplorer />
            <ModelView />
          </div>
          <div className="flex min-w-0 flex-1 flex-col gap-[3px]">
            <div className="flex flex-1 gap-[2px]">
              <Editor />
              <TaskList />
            </div>
            <PropertiesView />
          </div>
        </main>
        <footer className="flex h-[17px] items-center bg-[#e6e6e6]">
          <span className="ml-[80%] h-[11px] border-l-2 border-dotted border-[#b8b8b8]" />
        </footer>
      </div>
    </div>
  );
}
